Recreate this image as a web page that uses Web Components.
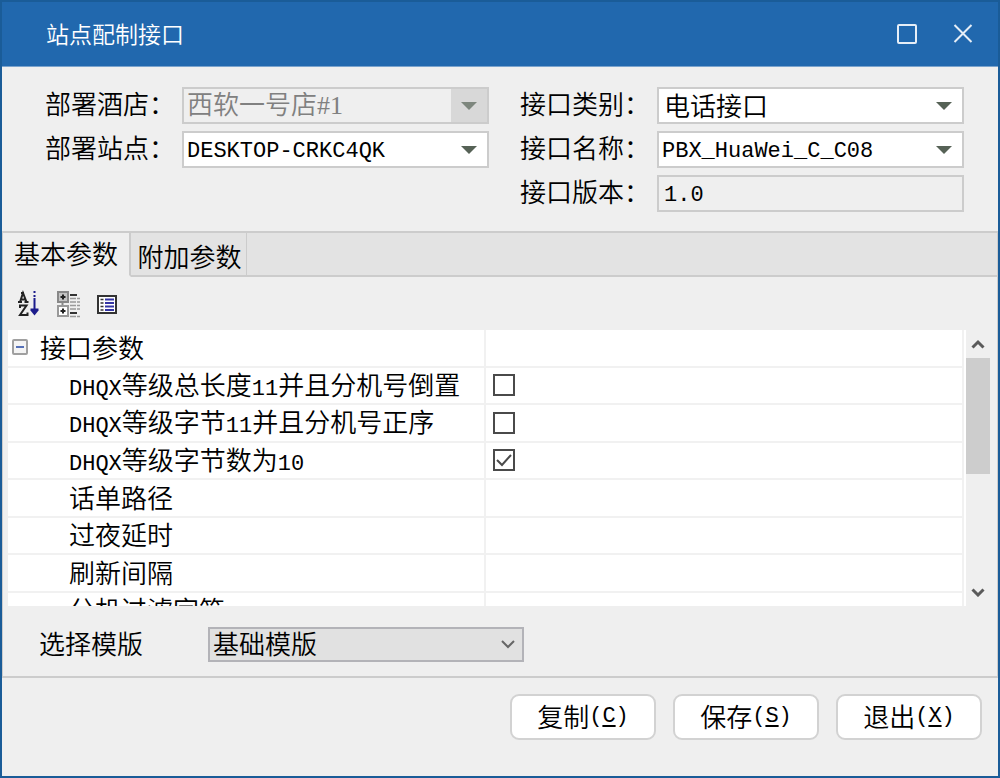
<!DOCTYPE html>
<html lang="zh-CN">
<head>
<meta charset="utf-8">
<title>站点配制接口</title>
<style>
  body {
    margin: 0;
    background: #efefef;
    color: #000;
    font: 350 26px/36px "Noto Sans CJK SC", sans-serif;
    --latin: 22px "Liberation Mono", "Noto Sans CJK SC", monospace;
    --line: #cccccc;
  }
</style>
</head>
<body>
<dialog-window>
  <title-bar slot="title">站点配制接口</title-bar>
  <field-grid slot="form">
    <combo-field label="部署酒店：" value="西软一号店#1" disabled></combo-field>
    <combo-field label="接口类别：" value="电话接口"></combo-field>
    <combo-field label="部署站点：" value="DESKTOP-CRKC4QK" latin></combo-field>
    <combo-field label="接口名称：" value="PBX_HuaWei_C_C08" latin></combo-field>
    <text-field label="接口版本：" value="1.0"></text-field>
  </field-grid>
  <tab-panel slot="panel">
    <tool-bar></tool-bar>
    <property-grid></property-grid>
    <template-picker></template-picker>
  </tab-panel>
  <push-button slot="actions" key="C">复制</push-button>
  <push-button slot="actions" key="S">保存</push-button>
  <push-button slot="actions" key="X">退出</push-button>
</dialog-window>

<script>
const define = (name, markup, setup) => {
  customElements.define(name, class extends HTMLElement {
    connectedCallback() {
      if (this.shadowRoot) return;
      const root = this.attachShadow({ mode: "open" });
      root.innerHTML = markup;
      if (setup) setup(this, root);
    }
  });
};

define("dialog-window", `
  <style>
    :host { display: flex; flex-direction: column; box-sizing: border-box; min-height: 100vh; border: 2px solid #1a5c98; }
    footer { display: flex; justify-content: flex-end; gap: 17px; padding: 16px; }
  </style>
  <slot name="title"></slot>
  <slot name="form"></slot>
  <slot name="panel"></slot>
  <footer><slot name="actions"></slot></footer>`);

define("title-bar", `
  <style>
    :host { display: flex; align-items: center; height: 64px; padding: 0 7px 0 44px; background: #2168ae; color: #fff; border-bottom: 1px solid #7aa3cd; }
    h1 { flex: 1; margin: 0; font-size: 23px; font-weight: inherit; line-height: 32px; padding-bottom: 2px; }
    button { width: 56px; height: 48px; padding: 0; border: 0; background: none; display: grid; place-items: center; }
    svg { display: block; }
  </style>
  <h1><slot></slot></h1>
  <button aria-label="最大化"><svg width="22" height="22" fill="none" stroke="#e6eef7" stroke-width="2"><rect x="2" y="2" width="18" height="18" rx="1"/></svg></button>
  <button aria-label="关闭"><svg width="22" height="22" fill="none" stroke="#e6eef7" stroke-width="2"><path d="M2.500 2l17 17M19.500 2l-17 17"/></svg></button>`);

define("field-grid", `
  <style>
    :host { display: grid; grid-template-columns: 1fr 1fr; column-gap: 31px; row-gap: 7px; padding: 20px 34px 19px 43px; }
    ::slotted(text-field) { grid-column: 2; }
  </style>
  <slot></slot>`);

const fieldStyle = `
  :host { display: flex; height: 37px; }
  label { flex: none; width: 137px; white-space: nowrap; line-height: 32px; }
  .box { flex: 1; min-width: 0; display: grid; }
  select, input { grid-area: 1 / 1; box-sizing: border-box; width: 100%; height: 37px; margin: 0; appearance: none;
    border: 2px solid #cccccc; border-radius: 0; background: #fff; color: #000; font: inherit; line-height: 28px; padding: 0 40px 2px 5px; }`;

define("combo-field", `
  <style>${fieldStyle}
    .arrow { grid-area: 1 / 1; justify-self: end; align-self: center; width: 36px; height: 33px; margin-right: 2px; pointer-events: none; display: grid; place-items: center; color: #566256; z-index: 1; }
    :host([latin]) select { font: var(--latin); padding: 3px 40px 0 3px; }
    select:disabled { background: #efefef; color: #808080; opacity: 1; font-family: "Liberation Serif", "Noto Sans CJK SC", serif; padding: 0 40px 0 3px; }
    select:disabled + .arrow { background: #d8d8d8; color: #7d867d; }
  </style>
  <label for="f"></label>
  <div class="box"><select id="f"><option></option></select><span class="arrow"><svg width="16" height="8"><path d="M0 0h16L8 8z" fill="currentColor"/></svg></span></div>`,
  (host, root) => {
    root.querySelector("label").textContent = host.getAttribute("label");
    root.querySelector("option").textContent = host.getAttribute("value");
    root.querySelector("select").disabled = host.hasAttribute("disabled");
  });

define("text-field", `
  <style>${fieldStyle}
    input { background: #efefef; font: var(--latin); padding: 3px 5px 0; }
  </style>
  <label for="f"></label>
  <div class="box"><input id="f" readonly></div>`,
  (host, root) => {
    root.querySelector("label").textContent = host.getAttribute("label");
    root.querySelector("input").value = host.getAttribute("value");
  });

define("tab-panel", `
  <style>
    :host { display: block; border: 2px solid var(--line); border-width: 2px 1px; }
    nav { display: flex; background: #e3e3e3; height: 44px; }
    button { box-sizing: border-box; margin: 0; border: 0; font: inherit; color: inherit; height: 44px; padding: 0; white-space: nowrap; background: #e3e3e3; border-right: 1px solid var(--line); border-bottom: 2px solid var(--line); }
    button:nth-child(1) { width: 128px; background: #efefef; border-bottom-color: #efefef; border-right-width: 2px; padding-bottom: 2px; }
    button:nth-child(2) { width: 116px; padding: 4px 0 0 2px; }
    i { flex: 1; border-bottom: 2px solid var(--line); }
  </style>
  <nav role="tablist"><button role="tab" aria-selected="true">基本参数</button><button role="tab" aria-selected="false">附加参数</button><i></i></nav>
  <slot></slot>`);

define("tool-bar", `
  <style>
    :host { display: flex; align-items: center; gap: 12px; height: 53px; padding-left: 11px; }
    button { width: 28px; height: 30px; padding: 0; border: 0; background: none; display: grid; place-items: center; }
    svg { display: block; }
  </style>
  <button aria-label="按字母排序"><svg width="24" height="28" viewBox="0 0 24 28" fill="none" stroke="#222" stroke-width="2">
    <path d="M4 12L7 3l3.500 9M5 9.500h5M2 12h4M8.500 12h4M5 3h3"/><path d="M4 18v-2.500h6.500L4 25h7.500v-2.500"/>
    <g stroke="#1c1c8c"><path d="M18.500 1v2M18.500 5v2M18.500 8v12"/><path d="M14.500 18.500h8v2l-4 5-4-5z" fill="#1c1c8c" stroke="none"/></g></svg></button>
  <button aria-label="按类别排序"><svg width="24" height="28" viewBox="0 0 24 28" fill="none">
    <path d="M6.500 12v4" stroke="#888" stroke-width="2"/>
    <rect x="2" y="2" width="10" height="10" fill="#c4c4c4" stroke="#888" stroke-width="2"/><rect x="2" y="16" width="10" height="10" fill="#fff" stroke="#999" stroke-width="2"/>
    <path d="M4.500 7h5M7 4.500v5M4.500 21h5M7 18.500v5" stroke="#222" stroke-width="2"/><path d="M14 5h7M14 23h7" stroke="#333" stroke-width="2"/>
    <path d="M14 8.500h10M14 12h10M14 15.500h10M14 19h10M14 26.500h10" stroke="#999" stroke-width="1.500" stroke-dasharray="6 1"/></svg></button>
  <button aria-label="属性页"><svg width="24" height="28" viewBox="0 0 24 28" fill="none">
    <rect x="2" y="6" width="18" height="17" fill="#fff" stroke="#333" stroke-width="2"/>
    <path d="M4.500 9.500h3M4.500 13h3M4.500 16.500h3M4.500 20h3" stroke="#333" stroke-width="1.500"/><path d="M9 9.500h9M9 13h9M9 16.500h9M9 20h9" stroke="#3434a4" stroke-width="2"/></svg></button>`);

define("property-grid", `
  <style>
    :host { display: flex; height: 276px; margin: 0 7px 0 5px; overflow: hidden; }
    .view { flex: 1; min-width: 0; overflow: hidden; background: #fff; padding-right: 2px; }
    table { width: 100%; height: 300px; border-collapse: separate; border-spacing: 0; table-layout: fixed; }
    th, td { box-sizing: border-box; height: 37px; padding: 0; border-right: 2px solid #f1f1f1; border-bottom: 2px solid #f1f1f1; font-weight: inherit; text-align: left; white-space: nowrap; line-height: 32px; }
    th { padding: 0 0 2px 61px; }
    td { padding-left: 7px; }
    th.group { padding-left: 4px; }
    .group div { display: flex; align-items: center; gap: 12px; }
    .group button { width: 16px; height: 16px; padding: 0; border: 2px solid #a0a0a0; border-radius: 2px; background: #f4f4f4; display: grid; place-items: center; }
    .group button::before { content: ""; width: 8px; height: 2px; background: #5570b8; }
    .latin { font: var(--latin); line-height: 1; }
    .tick { display: grid; width: 22px; height: 22px; }
    .tick input { grid-area: 1 / 1; appearance: none; width: 22px; height: 22px; margin: 0; border: 2px solid #4a4a4a; background: #fff; }
    .tick svg { grid-area: 1 / 1; display: none; pointer-events: none; z-index: 1; }
    .tick input:checked + svg { display: block; }
    .value { box-sizing: border-box; width: 100%; height: 30px; padding: 0; border: 0; outline: 0; background: none; font: inherit; display: block; }
    .bar { flex: none; width: 24px; display: flex; flex-direction: column; background: #efefef; }
    .bar button { height: 28px; padding: 0; border: 0; background: none; display: grid; place-items: center; }
    .track { flex: 1; }
    .thumb { height: 116px; background: #cdcdcd; }
  </style>
  <div class="view"><table><tbody>
    <tr><th class="group" scope="rowgroup"><div><button aria-label="折叠"></button><span>接口参数</span></div></th><td></td></tr>
  </tbody></table></div>
  <div class="bar">
    <button aria-label="向上滚动"><svg width="14" height="10" fill="none" stroke="#5a5a5a" stroke-width="3"><path d="M1.500 8.500L7 3l5.500 5.500"/></svg></button>
    <div class="track"><div class="thumb"></div></div>
    <button aria-label="向下滚动"><svg width="14" height="10" fill="none" stroke="#5a5a5a" stroke-width="3"><path d="M1.500 2.500L7 8l5.500-5.500"/></svg></button>
  </div>`,
  (host, root) => {
    const rows = [
      ["DHQX等级总长度11并且分机号倒置", false],
      ["DHQX等级字节11并且分机号正序", false],
      ["DHQX等级字节数为10", true],
      ["话单路径"], ["过夜延时"], ["刷新间隔"], ["分机过滤字符"]
    ];
    const body = root.querySelector("tbody");
    rows.forEach(([name, ticked], i) => {
      const label = name.replace(/[A-Z0-9]+/g, '<span class="latin">$&</span>');
      const control = ticked === undefined
        ? `<input class="value" id="p${i}" type="text">`
        : `<span class="tick"><input id="p${i}" type="checkbox"${ticked ? " checked" : ""}><svg width="22" height="22" fill="none" stroke="#4a4a4a" stroke-width="2"><path d="M4 11l5 5L18 6"/></svg></span>`;
      body.insertAdjacentHTML("beforeend", `<tr><th scope="row"><label for="p${i}">${label}</label></th><td>${control}</td></tr>`);
    });
  });

define("template-picker", `
  <style>
    :host { display: flex; align-items: center; height: 70px; box-sizing: border-box; padding: 6px 0 0 36px; }
    label { width: 169px; line-height: 32px; padding-bottom: 2px; }
    .box { display: grid; width: 33%; min-width: 200px; }
    select { grid-area: 1 / 1; appearance: none; box-sizing: border-box; width: 100%; height: 35px; border: 2px solid #b3b3b8; border-radius: 0; background: #e1e1e1; color: #000; font: inherit; line-height: 28px; padding: 0 30px 2px 3px; }
    svg { grid-area: 1 / 1; justify-self: end; align-self: center; margin-right: 8px; pointer-events: none; z-index: 1; }
  </style>
  <label for="t">选择模版</label>
  <div class="box"><select id="t"><option>基础模版</option></select><svg width="16" height="10" fill="none" stroke="#666" stroke-width="2"><path d="M2 2l6 6 6-6"/></svg></div>`);

define("push-button", `
  <style>
    :host { display: block; }
    button { display: flex; align-items: center; justify-content: center; width: 146px; height: 46px; padding: 0 0 2px; border: 2px solid #d2d2d2; border-radius: 9px; background: #fff; color: #000; font: inherit; white-space: nowrap; }
    span { font: var(--latin); }
    u { text-underline-offset: 3px; }
  </style>
  <button><slot></slot><span>(<u></u>)</span></button>`,
  (host, root) => { root.querySelector("u").textContent = host.getAttribute("key"); });
</script>
</body>
</html>
